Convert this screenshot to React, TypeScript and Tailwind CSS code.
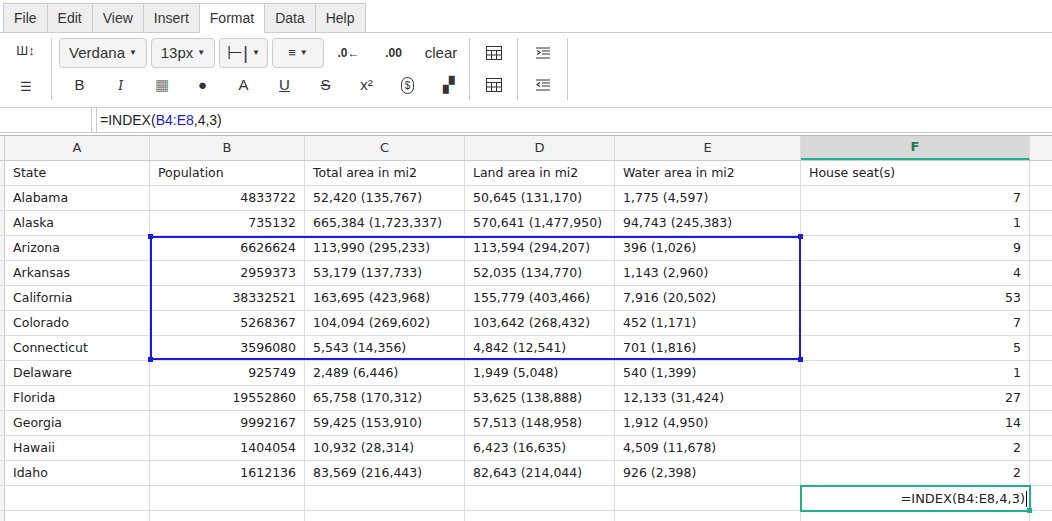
import React from "react";

const cols = [
  { l: "A", w: 145 },
  { l: "B", w: 155 },
  { l: "C", w: 160 },
  { l: "D", w: 150 },
  { l: "E", w: 186 },
  { l: "F", w: 229 },
  { l: "", w: 60 },
];

const rows: string[][] = [
  ["State", "Population", "Total area in mi2", "Land area in mi2", "Water area in mi2", "House seat(s)"],
  ["Alabama", "4833722", "52,420 (135,767)", "50,645 (131,170)", "1,775 (4,597)", "7"],
  ["Alaska", "735132", "665,384 (1,723,337)", "570,641 (1,477,950)", "94,743 (245,383)", "1"],
  ["Arizona", "6626624", "113,990 (295,233)", "113,594 (294,207)", "396 (1,026)", "9"],
  ["Arkansas", "2959373", "53,179 (137,733)", "52,035 (134,770)", "1,143 (2,960)", "4"],
  ["California", "38332521", "163,695 (423,968)", "155,779 (403,466)", "7,916 (20,502)", "53"],
  ["Colorado", "5268367", "104,094 (269,602)", "103,642 (268,432)", "452 (1,171)", "7"],
  ["Connecticut", "3596080", "5,543 (14,356)", "4,842 (12,541)", "701 (1,816)", "5"],
  ["Delaware", "925749", "2,489 (6,446)", "1,949 (5,048)", "540 (1,399)", "1"],
  ["Florida", "19552860", "65,758 (170,312)", "53,625 (138,888)", "12,133 (31,424)", "27"],
  ["Georgia", "9992167", "59,425 (153,910)", "57,513 (148,958)", "1,912 (4,950)", "14"],
  ["Hawaii", "1404054", "10,932 (28,314)", "6,423 (16,635)", "4,509 (11,678)", "2"],
  ["Idaho", "1612136", "83,569 (216,443)", "82,643 (214,044)", "926 (2,398)", "2"],
  ["", "", "", "", "", ""],
  ["", "", "", "", "", ""],
];

const Ico = ({ children }: { children: React.ReactNode }) => (
  <div className="flex h-[30px] w-[41px] shrink-0 items-center justify-center text-[#333]">{children}</div>
);

const Drop = ({ label, w }: { label: React.ReactNode; w: number }) => (
  <div
    className="flex h-[30px] shrink-0 items-center justify-center gap-1 rounded border border-[#ccc] bg-[#f4f4f4] text-[15px] text-[#333]"
    style={{ width: w }}
  >
    {label}
    <span className="text-[8px]">▼</span>
  </div>
);

const Grid = () => (
  <svg width="16" height="14" viewBox="0 0 16 14" fill="none" stroke="#333" strokeWidth="1">
    <rect x="0.5" y="0.5" width="15" height="13" />
    <path d="M0.5 4.5h15M0.5 9h15M5.5 4.5v9M10.5 4.5v9" />
  </svg>
);

const Indent = ({ out }: { out?: boolean }) => (
  <svg width="14" height="12" viewBox="0 0 14 12" stroke="#333" strokeWidth="1.2" fill="none">
    <path d="M0 1h14M6 4h8M6 7h8M0 11h14" />
    <path d={out ? "M4 3.5L1 5.5L4 7.5" : "M1 3.5L4 5.5L1 7.5"} />
  </svg>
);

export default function App() {
  return (
    <div className="relative h-[521px] w-[1052px] overflow-hidden bg-white" style={{ fontFamily: "'Liberation Sans', Arial, sans-serif" }}>
      {/* menu */}
      <div className="flex h-[33px] items-end border-b border-[#ccc] pl-[3px]">
        {["File", "Edit", "View", "Insert", "Format", "Data", "Help"].map((m) => (
          <div
            key={m}
            className={`-mb-px flex h-[30px] items-center border border-[#ccc] px-[10px] text-[14px] text-[#333] ${
              m === "Format" ? "border-b-white bg-white" : "bg-[#eee]"
            } ${m !== "File" ? "-ml-px" : ""}`}
          >
            {m}
          </div>
        ))}
      </div>
      {/* toolbar */}
      <div className="flex h-[69px] items-stretch pt-[3px]">
        <div className="my-[2px] flex w-[52px] flex-col items-center justify-center gap-[6px] border-r border-[#ccc]">
          <Ico><span className="text-[13px]">Ш↕</span></Ico>
          <Ico><span className="text-[13px]">☰</span></Ico>
        </div>
        <div className="my-[2px] flex w-[418px] flex-col justify-center gap-[2px] border-r border-[#ccc] pl-[7px]">
          <div className="flex items-center gap-[4px]">
            <Drop label="Verdana" w={88} />
            <Drop label="13px" w={64} />
            <Drop label={<span className="text-[18px] font-light">⊢|</span>} w={49} />
            <Drop label={<span className="text-[13px]">≡</span>} w={52} />
            <Ico><span className="text-[12px] font-bold">.0←</span></Ico>
            <Ico><span className="text-[12px] font-bold">.00</span></Ico>
            <div className="flex h-[30px] w-[46px] items-center justify-center text-[15px] text-[#333]">clear</div>
          </div>
          <div className="flex items-center text-[15px]">
            {["B", "I", "▦", "●", "A", "U", "S", "x²", "$", "▞"].map((t, i) => (
              <Ico key={i}>
                <span
                  className={
                    i === 1
                      ? "font-serif italic"
                      : i === 2
                      ? "text-[#777]"
                      : i === 5
                      ? "underline"
                      : i === 6
                      ? "line-through"
                      : i === 8
                      ? "rounded-full border border-[#333] px-[3px] text-[10px]"
                      : ""
                  }
                >
                  {t}
                </span>
              </Ico>
            ))}
          </div>
        </div>
        <div className="my-[2px] flex w-[48px] flex-col items-center justify-center gap-[2px] border-r border-[#ccc]">
          <Ico><Grid /></Ico>
          <Ico><Grid /></Ico>
        </div>
        <div className="my-[2px] flex w-[50px] flex-col items-center justify-center gap-[2px] border-r border-[#ccc]">
          <Ico><Indent /></Ico>
          <Ico><Indent out /></Ico>
        </div>
      </div>
      {/* formula bar */}
      <div className="mt-[5px] flex h-[26px] border-y border-[#ccc]">
        <div className="w-[92px] border-r border-[#ccc]" />
        <div className="ml-[4px] flex flex-1 items-center border-l border-[#ccc] pl-[3px] text-[14px] text-[#222]">
          =INDEX(<span className="text-[#1a1adb]">B4:E8</span>,4,3)
        </div>
      </div>
      {/* sheet */}
      <div className="mt-[2px] border-t border-[#bbb]" style={{ fontFamily: "'DejaVu Sans', Verdana, sans-serif" }}>
        <div className="flex h-[25px] border-b border-[#ccc] bg-[#f4f4f4] text-[13px] text-[#333]">
          <div className="w-[5px] shrink-0 border-r border-[#ccc]" />
          {cols.map((c, i) => (
            <div
              key={i}
              className={`flex shrink-0 items-center justify-center border-r border-[#ddd] ${
                c.l === "F" ? "border-b-2 border-b-[#21b08e] bg-[#d8d8d8] font-bold text-[#1f7a47]" : ""
              }`}
              style={{ width: c.w }}
            >
              {c.l}
            </div>
          ))}
        </div>
        {rows.map((r, ri) => (
          <div key={ri} className="flex h-[25px] border-b border-[#ddd] text-[12.5px] text-[#222]">
            <div className="w-[5px] shrink-0 border-r border-[#ccc] bg-[#f4f4f4]" />
            {cols.map((c, ci) => {
              const v = r[ci] ?? "";
              const num = ri > 0 && (ci === 1 || ci === 5);
              return (
                <div
                  key={ci}
                  className={`flex shrink-0 items-center overflow-hidden whitespace-nowrap border-r border-[#ddd] px-[8px] ${num ? "justify-end" : ""}`}
                  style={{ width: c.w }}
                >
                  {v}
                </div>
              );
            })}
          </div>
        ))}
      </div>
      {/* selection B4:E8 */}
      <div className="absolute left-[150px] top-[236px] h-[124px] w-[651px] border-2 border-[#1a1ae0]">
        <div className="absolute -left-[4px] -top-[4px] h-[5px] w-[5px] bg-[#1a1ae0]" />
        <div className="absolute -right-[4px] -top-[4px] h-[5px] w-[5px] bg-[#1a1ae0]" />
        <div className="absolute -bottom-[4px] -left-[4px] h-[5px] w-[5px] bg-[#1a1ae0]" />
        <div className="absolute -bottom-[4px] -right-[4px] h-[5px] w-[5px] bg-[#1a1ae0]" />
      </div>
      {/* active cell editor */}
      <div
        className="absolute left-[800px] top-[485px] flex h-[27px] w-[231px] items-center justify-end border-2 border-[#21b08e] bg-white pr-[2px] text-[13px] text-[#222]"
        style={{ fontFamily: "'DejaVu Sans', Verdana, sans-serif" }}
      >
        =INDEX(B4:E8,4,3)<span className="ml-px h-[16px] w-px bg-black" />
        <div className="absolute -bottom-[3px] -right-[3px] h-[5px] w-[5px] bg-[#21b08e]" />
      </div>
    </div>
  );
}
